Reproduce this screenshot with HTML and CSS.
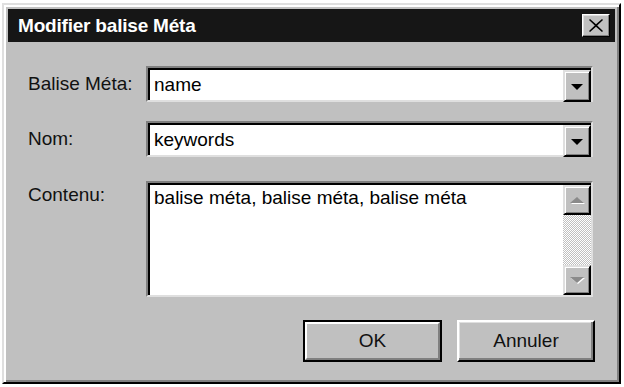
FILE: index.html
```html
<!DOCTYPE html>
<html lang="fr">
<head>
<meta charset="utf-8">
<title>Modifier balise Méta</title>
<link rel="stylesheet" href="styles.css">
</head>
<body>
<div class="window">
  <div class="titlebar">
    <span class="title">Modifier balise Méta</span>
    <span class="close">
      <svg width="14" height="13" viewBox="0 0 14 13"><path d="M1 0 L7 5.2 L13 0 L14 1 L8.2 6.5 L14 12 L13 13 L7 7.8 L1 13 L0 12 L5.8 6.5 L0 1 Z" fill="#000"/></svg>
    </span>
  </div>
  <div class="content">
    <div class="row">
      <span class="label">Balise Méta:</span>
      <div class="field combo">
        <span class="value">name</span>
        <span class="dropbtn"><span class="arrow-down"></span></span>
      </div>
    </div>
    <div class="row">
      <span class="label">Nom:</span>
      <div class="field combo">
        <span class="value">keywords</span>
        <span class="dropbtn"><span class="arrow-down"></span></span>
      </div>
    </div>
    <div class="row row-area">
      <span class="label label-top">Contenu:</span>
      <div class="field area">
        <span class="value value-top">balise méta, balise méta, balise méta</span>
        <div class="scrollbar">
          <span class="sbtn"><span class="arrow-up-dis"></span></span>
          <span class="track"></span>
          <span class="sbtn"><span class="arrow-down-dis"></span></span>
        </div>
      </div>
    </div>
    <div class="buttons">
      <span class="btn default"><span class="btn-inner">OK</span></span>
      <span class="btn"><span class="btn-inner">Annuler</span></span>
    </div>
  </div>
</div>
</body>
</html>
```
FILE: styles.css
```css
* { box-sizing: border-box; }
html, body { margin: 0; padding: 0; background: #fff; }
body {
  font-family: "Liberation Sans", Arial, sans-serif;
  width: 624px;
  height: 387px;
  overflow: hidden;
}
.window {
  margin: 3px 0 0 2px;
  width: 619px;
  height: 381px;
  background: #c0c0c0;
  border: 2px solid;
  border-color: #dfdfdf #000 #000 #dfdfdf;
  box-shadow: inset 2px 2px #fff, inset -2px -2px #808080;
  padding: 4px;
  display: flex;
  flex-direction: column;
}
.titlebar {
  height: 33px;
  background: #161616;
  display: flex;
  align-items: center;
  justify-content: space-between;
  padding: 0 5px 0 10px;
}
.title {
  color: #fff;
  font-weight: bold;
  font-size: 19px;
  letter-spacing: -0.2px;
}
.close {
  width: 28px;
  height: 23px;
  background: #c0c0c0;
  border: 1px solid;
  border-color: #fff #000 #000 #fff;
  box-shadow: inset -1px -1px #808080, inset 1px 1px #dfdfdf;
  display: flex;
  align-items: center;
  justify-content: center;
}
.content {
  flex: 1;
  padding: 24px 20px 15px 20px;
  display: flex;
  flex-direction: column;
  color: #111;
  font-size: 19px;
}
.row {
  display: flex;
  align-items: center;
  height: 36px;
  margin-right: 2px;
  margin-bottom: 19px;
}
.row-area {
  align-items: flex-start;
  height: 116px;
  margin-top: 5px;
  margin-bottom: 23px;
}
.label {
  width: 118px;
  flex: none;
  white-space: nowrap;
}
.label-top { padding-top: 3px; }
.field {
  flex: 1;
  height: 100%;
  background: #fff;
  border: 2px solid;
  border-color: #808080 #dfdfdf #dfdfdf #808080;
  box-shadow: inset 2px 2px #000;
  display: flex;
  padding: 2px 0 0 2px;
}
.combo { align-items: center; }
.value {
  flex: 1;
  padding-left: 4px;
  white-space: nowrap;
  color: #000;
}
.value-top { align-self: flex-start; padding-top: 2px; }
.dropbtn {
  width: 28px;
  height: 32px;
  margin: 0 0 0 0;
  align-self: flex-start;
  background: #c0c0c0;
  border: 2px solid;
  border-color: #dfdfdf #000 #000 #dfdfdf;
  box-shadow: inset 1px 1px #fff, inset -1px -1px #808080;
  display: flex;
  align-items: center;
  justify-content: center;
}
.arrow-down {
  width: 0; height: 0;
  border-left: 6px solid transparent;
  border-right: 6px solid transparent;
  border-top: 6px solid #000;
  margin-top: 2px;
}
.scrollbar {
  width: 28px;
  height: 100%;
  display: flex;
  flex-direction: column;
}
.sbtn {
  height: 30px;
  flex: none;
  background: #c0c0c0;
  border: 2px solid;
  border-color: #dfdfdf #000 #000 #dfdfdf;
  box-shadow: inset 1px 1px #fff, inset -1px -1px #808080;
  display: flex;
  align-items: center;
  justify-content: center;
}
.track {
  flex: 1;
  background: repeating-conic-gradient(#c0c0c0 0 25%, #fff 0 50%) 0 0 / 2px 2px;
}
.arrow-up-dis {
  width: 0; height: 0;
  border-left: 7px solid transparent;
  border-right: 7px solid transparent;
  border-bottom: 6px solid #8a8a8a;
  filter: drop-shadow(1px 1px 0 #fff);
}
.arrow-down-dis {
  width: 0; height: 0;
  border-left: 7px solid transparent;
  border-right: 7px solid transparent;
  border-top: 6px solid #8a8a8a;
  filter: drop-shadow(1px 1px 0 #fff);
}
.buttons {
  display: flex;
  justify-content: flex-end;
  gap: 15px;
  height: 42px;
}
.btn {
  width: 138px;
  height: 42px;
  background: #c0c0c0;
  border: 2px solid;
  border-color: #fff #000 #000 #fff;
  box-shadow: inset -2px -2px #808080, inset 1px 1px #dfdfdf;
  display: flex;
}
.btn.default {
  width: 139px;
  border: 2px solid #000;
  box-shadow: none;
}
.btn-inner {
  flex: 1;
  display: flex;
  align-items: center;
  justify-content: center;
  color: #111;
  font-size: 19px;
}
.btn.default .btn-inner {
  border: 2px solid;
  border-color: #fff #808080 #808080 #fff;
}
```
